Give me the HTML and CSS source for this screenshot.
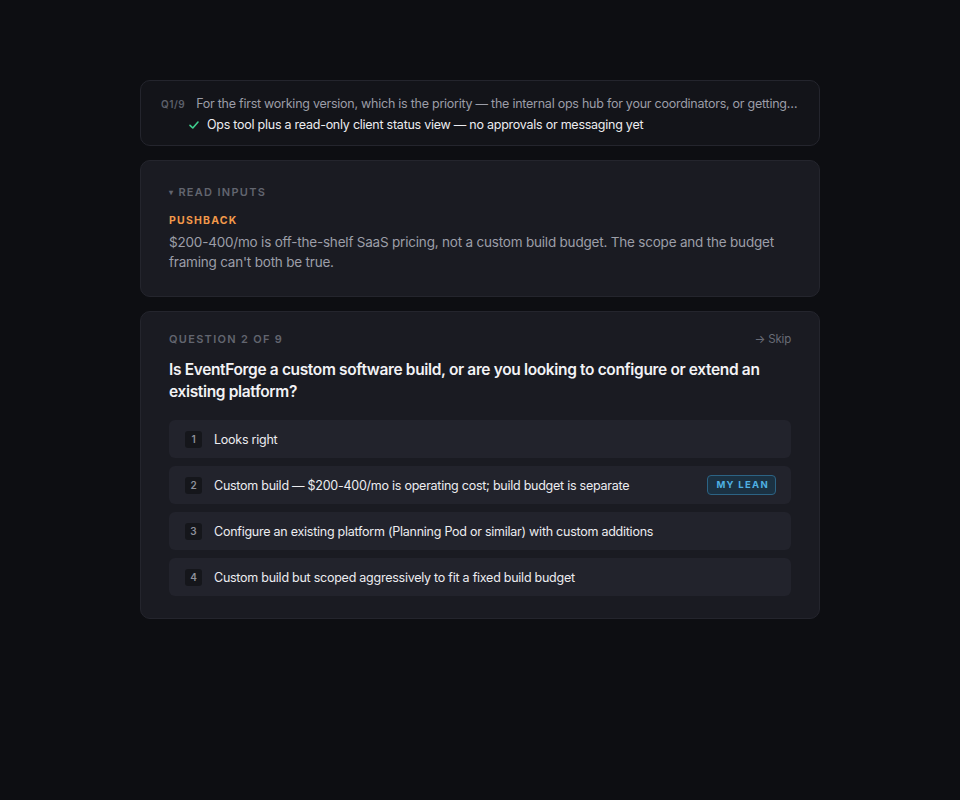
FILE: index.html
```html
<!DOCTYPE html>
<html>
<head>
<meta charset="utf-8">
<link rel="stylesheet" href="styles.css">
</head>
<body>
<main class="stack">
  <section class="card card-prev">
    <div class="prev-q">
      <span class="prev-num">Q1/9</span>
      <span class="prev-text">For the first working version, which is the priority — the internal ops hub for your coordinators, or getting…</span>
    </div>
    <div class="prev-a">
      <svg class="check" width="12" height="12" viewBox="0 0 12 12"><path d="M2 6.3 L4.8 9 L10 3" fill="none" stroke="#3fcf8e" stroke-width="1.6" stroke-linecap="round" stroke-linejoin="round"/></svg>
      <span>Ops tool plus a read-only client status view — no approvals or messaging yet</span>
    </div>
  </section>

  <section class="card card-inputs">
    <div class="eyebrow"><span class="caret">▾</span> READ INPUTS</div>
    <div class="pushback">PUSHBACK</div>
    <p class="pushback-text">$200-400/mo is off-the-shelf SaaS pricing, not a custom build budget. The scope and the budget framing can't both be true.</p>
  </section>

  <section class="card card-question">
    <div class="q-head">
      <span class="eyebrow">QUESTION 2 OF 9</span>
      <span class="skip">→ Skip</span>
    </div>
    <h2 class="q-title">Is EventForge a custom software build, or are you looking to configure or extend an existing platform?</h2>
    <ul class="options">
      <li class="option"><span class="num">1</span><span class="opt-text">Looks right</span></li>
      <li class="option"><span class="num">2</span><span class="opt-text">Custom build — $200-400/mo is operating cost; build budget is separate</span><span class="lean">MY LEAN</span></li>
      <li class="option"><span class="num">3</span><span class="opt-text">Configure an existing platform (Planning Pod or similar) with custom additions</span></li>
      <li class="option"><span class="num">4</span><span class="opt-text">Custom build but scoped aggressively to fit a fixed build budget</span></li>
    </ul>
  </section>
</main>
</body>
</html>
```
FILE: styles.css
```css
* { box-sizing: border-box; }
html, body { margin: 0; padding: 0; }
body {
  background: #0d0e12;
  font-family: Inter, "Noto Sans", sans-serif;
  color: #e8e8ec;
  min-height: 800px;
}
.stack {
  width: 680px;
  margin: 80px auto 0;
  display: flex;
  flex-direction: column;
  gap: 14px;
}
.card {
  border: 1px solid #24252d;
  border-radius: 10px;
  background: #1a1b22;
}
.card-prev {
  background: #131419;
  padding: 14px 20px 11px;
  display: flex;
  flex-direction: column;
  gap: 3px;
}
.prev-q {
  display: flex;
  align-items: baseline;
  gap: 11px;
  font-size: 12.5px;
  letter-spacing: -0.25px;
  line-height: 18px;
  white-space: nowrap;
  overflow: hidden;
}
.prev-num {
  font-size: 10px;
  font-weight: 600;
  color: #5d606b;
  letter-spacing: 0.5px;
}
.prev-text { color: #9b9da7; overflow: hidden; text-overflow: ellipsis; }
.prev-a {
  display: flex;
  align-items: center;
  gap: 7px;
  padding-left: 27px;
  font-size: 12.5px;
  letter-spacing: -0.25px;
  line-height: 18px;
  color: #ececf0;
}
.card-inputs { padding: 24px 28px 24px; }
.eyebrow {
  font-size: 11px;
  font-weight: 600;
  letter-spacing: 1.3px;
  color: #62656f;
  line-height: 14px;
}
.caret { font-size: 8px; position: relative; top: -1px; }
.pushback {
  margin-top: 14px;
  font-size: 10.5px;
  font-weight: 700;
  letter-spacing: 1.2px;
  color: #f2994a;
  line-height: 14px;
}
.pushback-text {
  margin: 4px 0 0;
  font-size: 13.5px;
  letter-spacing: -0.2px;
  line-height: 20px;
  color: #9c9ea8;
}
.card-question { padding: 20px 28px 22px; }
.q-head {
  display: flex;
  justify-content: space-between;
  align-items: center;
}
.skip { font-size: 11.5px; letter-spacing: -0.2px; color: #686b76; }
.q-title {
  margin: 13px 0 17px;
  font-size: 15.5px;
  letter-spacing: -0.35px;
  font-weight: 600;
  line-height: 22px;
  color: #f2f2f5;
}
.options {
  list-style: none;
  margin: 0;
  padding: 0;
  display: flex;
  flex-direction: column;
  gap: 8px;
}
.option {
  display: flex;
  align-items: center;
  height: 38px;
  padding: 0 15px 0 16px;
  background: #22232c;
  border-radius: 6px;
  font-size: 12.5px;
  letter-spacing: -0.25px;
  color: #ececf0;
}
.num {
  width: 17px;
  height: 17px;
  border-radius: 3px;
  background: #15161b;
  color: #8e909a;
  font-size: 10px;
  font-weight: 600;
  letter-spacing: 0;
  display: flex;
  align-items: center;
  justify-content: center;
  margin-right: 12px;
}
.opt-text { flex: 1; }
.lean {
  font-size: 9.5px;
  font-weight: 700;
  letter-spacing: 1.3px;
  color: #4fb0e3;
  background: #1b3142;
  border: 1px solid #2c6384;
  border-radius: 4px;
  padding: 3px 6px 3px 8px;
  line-height: 12px;
}
```
